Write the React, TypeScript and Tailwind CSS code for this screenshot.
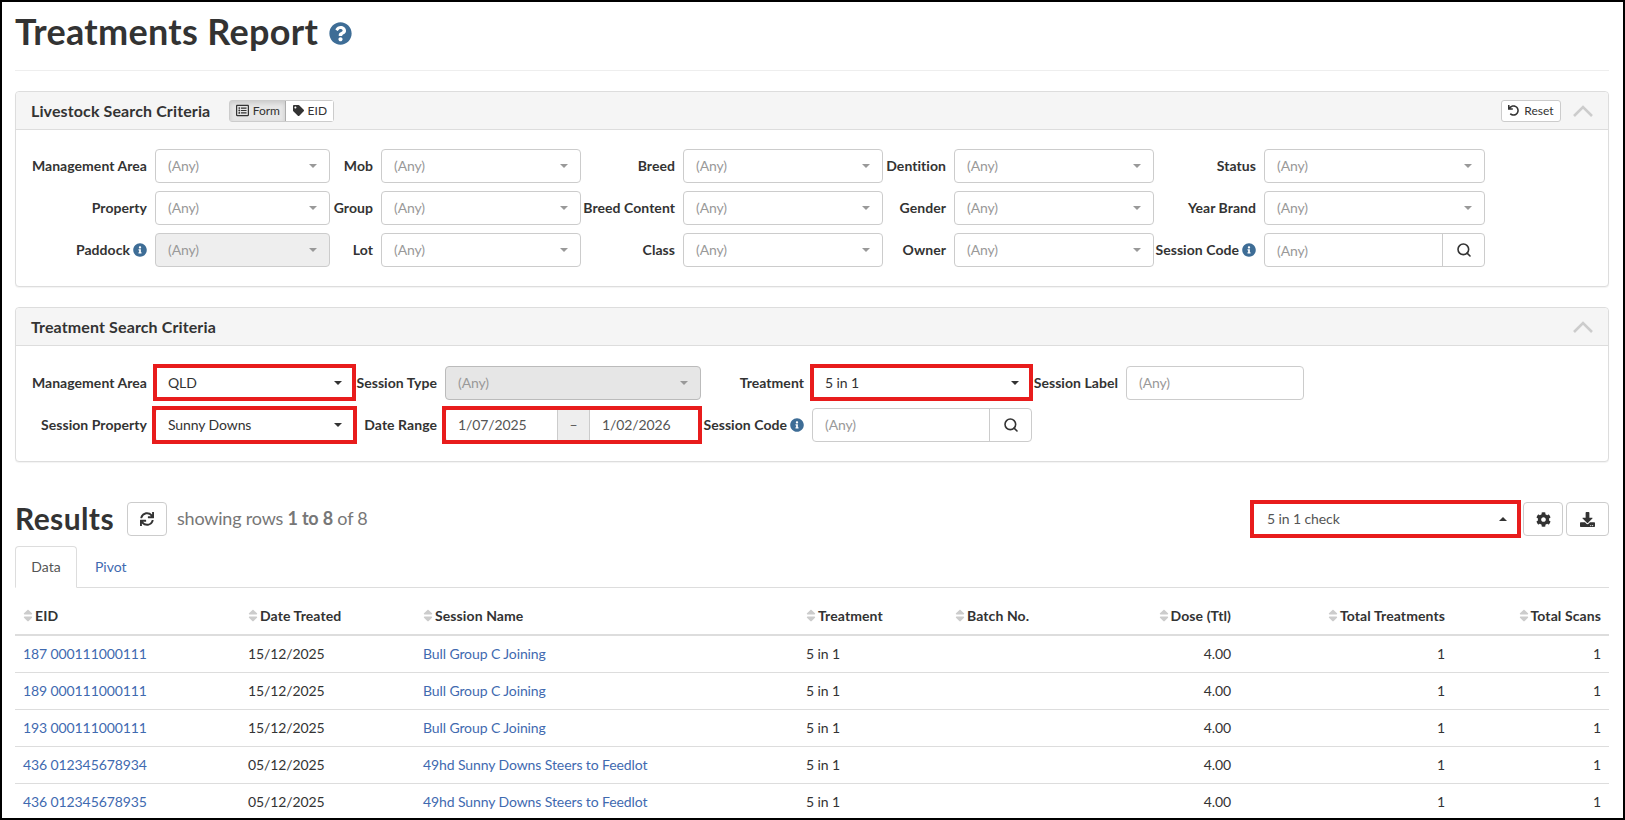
import type { ReactNode } from 'react';
import { Search } from 'lucide-react';
import {
  FaCog,
  FaDownload,
  FaInfoCircle,
  FaQuestionCircle,
  FaRegListAlt,
  FaSort,
  FaSync,
  FaTag,
  FaUndo,
} from 'react-icons/fa';

interface Row {
  eid: string;
  date: string;
  session: string;
}

const rows: Row[] = [
  { eid: '187 000111000111', date: '15/12/2025', session: 'Bull Group C Joining' },
  { eid: '189 000111000111', date: '15/12/2025', session: 'Bull Group C Joining' },
  { eid: '193 000111000111', date: '15/12/2025', session: 'Bull Group C Joining' },
  { eid: '436 012345678934', date: '05/12/2025', session: '49hd Sunny Downs Steers to Feedlot' },
  { eid: '436 012345678935', date: '05/12/2025', session: '49hd Sunny Downs Steers to Feedlot' },
];

function Caret({ dark, up }: { dark?: boolean; up?: boolean }) {
  const color = dark ? 'border-t-[#333]' : 'border-t-[#999]';
  return <span className={`h-0 w-0 border-x-4 border-t-4 border-x-transparent ${color} ${up ? 'rotate-180' : ''}`} />;
}

function Label({ children, info }: { children: ReactNode; info?: boolean }) {
  return (
    <label className="flex h-[34px] items-center justify-end gap-[3px] whitespace-nowrap pr-2 text-[14px] font-bold tracking-[0.05px] text-[#333]">
      {children}
      {info && <FaInfoCircle className="text-[14px] text-[#3e6d96]" />}
    </label>
  );
}

function Select({ value, disabled }: { value?: string; disabled?: boolean }) {
  return (
    <div
      className={`flex h-[34px] items-center justify-between rounded-[4px] border border-[#ccc] pl-3 pr-[12px] text-[14px] tracking-[-0.1px] ${
        disabled ? 'bg-[#eee]' : 'bg-white'
      } ${value ? 'text-[#333]' : 'text-[#999]'}`}
    >
      <span>{value ?? '(Any)'}</span>
      <Caret dark={!!value} />
    </div>
  );
}

function SearchInput({ low }: { low?: boolean }) {
  return (
    <div className="flex h-[34px] rounded-[4px] border border-[#ccc] bg-white text-[14px] tracking-[-0.1px] text-[#999]">
      <span className={`flex flex-1 items-center pl-3 ${low ? 'pt-px' : ''}`}>(Any)</span>
      <span className="flex w-[42px] items-center justify-center border-l border-[#ccc] text-[#333]">
        <Search size={16} strokeWidth={2.4} />
      </span>
    </div>
  );
}

// red annotation drawn over the screenshot
function Marked({ children, className }: { children: ReactNode; className: string }) {
  return (
    <div className="relative">
      {children}
      <div className={`pointer-events-none absolute border-4 border-[#e81c1c] ${className}`} />
    </div>
  );
}

function Chevron() {
  return (
    <svg width="20" height="12" viewBox="0 0 20 12" fill="none" className="text-[#ccc]">
      <polyline points="1,11 10,2 19,11" stroke="currentColor" strokeWidth="2.6" />
    </svg>
  );
}

function Panel({ title, extra, right, children }: { title: string; extra?: ReactNode; right?: ReactNode; children: ReactNode }) {
  return (
    <section className="rounded-[4px] border border-[#ddd] bg-white shadow-[0_1px_1px_rgba(0,0,0,0.05)]">
      <header className="flex h-[38px] items-center rounded-t-[4px] border-b border-[#ddd] bg-[#f5f5f5] pl-[15px] pr-[15px]">
        <h3 className="text-[16px] font-bold tracking-[0.12px] text-[#333]">{title}</h3>
        {extra}
        <div className="ml-auto flex items-center gap-[12px]">
          {right}
          <Chevron />
        </div>
      </header>
      {children}
    </section>
  );
}

function SortHead({ children, right }: { children: ReactNode; right?: boolean }) {
  return (
    <th className={`h-[48px] border-b-2 border-[#ddd] px-2 pb-[6px] align-bottom text-[14px] font-bold tracking-[0.1px] text-[#333] ${right ? 'text-right' : 'text-left'}`}>
      <span className="inline-flex items-center gap-[2px]">
        <FaSort className="h-[15px] w-[10px] text-[#ccc]" />
        {children}
      </span>
    </th>
  );
}

export default function App() {
  return (
    <div className="h-[820px] w-[1625px] overflow-hidden border-2 border-black bg-white pl-[13px] pr-[14px] font-[Lato,sans-serif] text-[14px] leading-5 text-[#333]">
      <div className="flex h-[69px] items-start gap-[11px] border-b border-[#eee] pt-[6px]">
        <h1 className="text-[36px] font-bold leading-[46px] tracking-[0.3px] text-[#333]">Treatments Report</h1>
        <FaQuestionCircle className="mt-[14px] text-[23px] text-[#3e6d96]" />
      </div>

      <div className="mt-5">
        <Panel
          title="Livestock Search Criteria"
          extra={
            <div className="ml-[19px] flex h-[22px] rounded-[3px] border border-[#ccc] text-[12px]">
              <span className="flex w-[56px] items-center justify-center gap-1 border-r border-[#adadad] bg-[#e6e6e6] shadow-[inset_0_2px_4px_rgba(0,0,0,0.125)]">
                <FaRegListAlt className="text-[13px]" /> Form
              </span>
              <span className="flex w-[47px] items-center justify-center gap-1 bg-white">
                <FaTag className="text-[11px]" /> EID
              </span>
            </div>
          }
          right={
            <span className="flex h-[22px] w-[60px] items-center justify-center gap-[5px] rounded-[3px] border border-[#ccc] bg-white text-[12px]">
              <FaUndo className="text-[11px]" /> Reset
            </span>
          }
        >
          <div className="grid grid-cols-[124px_175px_51px_200px_102px_200px_71px_200px_110px_221px] gap-y-2 pb-[19px] pl-[15px] pt-[19px]">
            <Label>Management Area</Label>
            <Select />
            <Label>Mob</Label>
            <Select />
            <Label>Breed</Label>
            <Select />
            <Label>Dentition</Label>
            <Select />
            <Label>Status</Label>
            <Select />

            <Label>Property</Label>
            <Select />
            <Label>Group</Label>
            <Select />
            <Label>Breed Content</Label>
            <Select />
            <Label>Gender</Label>
            <Select />
            <Label>Year Brand</Label>
            <Select />

            <Label info>Paddock</Label>
            <Select disabled />
            <Label>Lot</Label>
            <Select />
            <Label>Class</Label>
            <Select />
            <Label>Owner</Label>
            <Select />
            <Label info>Session Code</Label>
            <SearchInput low />
          </div>
        </Panel>
      </div>

      <div className="mt-5">
        <Panel title="Treatment Search Criteria">
          <div className="grid grid-cols-[124px_200px_90px_256px_111px_220px_94px_178px] gap-y-2 pb-[19px] pl-[15px] pt-[20px]">
            <Label>Management Area</Label>
            <Marked className="-bottom-px -left-[2px] -right-px -top-[2px]">
              <Select value="QLD" />
            </Marked>
            <Label>Session Type</Label>
            <div className="flex h-[34px] items-center justify-between rounded-[4px] border border-[#bbb] bg-[#e6e6e6] pl-3 pr-[12px] tracking-[-0.1px] text-[#999]">
              <span>(Any)</span>
              <Caret />
            </div>
            <Label>Treatment</Label>
            <Marked className="-bottom-px -left-[2px] -right-px -top-[2px]">
              <Select value="5 in 1" />
            </Marked>
            <Label>Session Label</Label>
            <div className="flex h-[34px] items-center rounded-[4px] border border-[#ccc] pl-3 tracking-[-0.1px] text-[#999]">(Any)</div>

            <Label>Session Property</Label>
            <Marked className="-inset-y-[2px] -left-[3px] -right-[2px]">
              <Select value="Sunny Downs" />
            </Marked>
            <Label>Date Range</Label>
            <Marked className="-inset-y-[2px] -left-[3px] -right-px">
              <div className="flex h-[34px] rounded-[4px] border border-[#ccc] tracking-[-0.1px] text-[#555]">
                <span className="flex w-[111px] items-center pl-3">1/07/2025</span>
                <span className="flex w-[33px] items-center justify-center border-x border-[#ccc] bg-[#eee]">–</span>
                <span className="flex flex-1 items-center pl-3">1/02/2026</span>
              </div>
            </Marked>
            <Label info>Session Code</Label>
            <SearchInput />
          </div>
        </Panel>
      </div>

      <div className="mt-[40px] flex h-[34px] items-center">
        <h2 className="w-[112px] pb-[2px] text-[30px] font-bold tracking-[0.4px] text-[#333]">Results</h2>
        <span className="flex h-[34px] w-[40px] items-center justify-center rounded-[4px] border border-[#ccc] text-[14px]">
          <FaSync />
        </span>
        <span className="ml-[10px] pb-[2px] text-[18px] tracking-[-0.2px] text-[#777]">
          showing rows <b className="font-bold">1 to 8</b> of 8
        </span>
        <div className="ml-auto flex items-center">
          <Marked className="-inset-x-[4px] -inset-y-[2px]">
            <div className="flex h-[34px] w-[263px] items-center justify-between pl-[13px] pr-[10px] tracking-[-0.1px] text-[#555]">
              <span>5 in 1 check</span>
              <Caret dark up />
            </div>
          </Marked>
          <span className="ml-[6px] flex h-[34px] w-[40px] items-center justify-center rounded-[4px] border border-[#ccc] text-[15px]">
            <FaCog />
          </span>
          <span className="ml-[3px] flex h-[34px] w-[43px] items-center justify-center rounded-[4px] border border-[#ccc] text-[15px]">
            <FaDownload />
          </span>
        </div>
      </div>

      <div className="mt-[10px] flex h-[42px] border-b border-[#ddd] text-[14px]">
        <span className="-mb-px flex h-[42px] w-[62px] items-center justify-center rounded-t-[4px] border border-[#ddd] border-b-white bg-white text-[#555]">Data</span>
        <span className="flex items-center pl-[18px] text-[#3f6ab0]">Pivot</span>
      </div>

      <table className="w-[1594px] table-fixed border-separate border-spacing-0">
        <colgroup>
          <col className="w-[225px]" />
          <col className="w-[175px]" />
          <col className="w-[383px]" />
          <col className="w-[149px]" />
          <col className="w-[150px]" />
          <col className="w-[142px]" />
          <col className="w-[214px]" />
          <col className="w-[156px]" />
        </colgroup>
        <thead>
          <tr>
            <SortHead>EID</SortHead>
            <SortHead>Date Treated</SortHead>
            <SortHead>Session Name</SortHead>
            <SortHead>Treatment</SortHead>
            <SortHead>Batch No.</SortHead>
            <SortHead right>Dose (Ttl)</SortHead>
            <SortHead right>Total Treatments</SortHead>
            <SortHead right>Total Scans</SortHead>
          </tr>
        </thead>
        <tbody className="tracking-[-0.1px]">
          {rows.map((r) => (
            <tr key={r.eid} className="h-[37px]">
              <td className="border-b border-[#ddd] px-2 text-[#3f6ab0]">{r.eid}</td>
              <td className="border-b border-[#ddd] px-2">{r.date}</td>
              <td className="border-b border-[#ddd] px-2 text-[#3f6ab0]">{r.session}</td>
              <td className="border-b border-[#ddd] px-2">5 in 1</td>
              <td className="border-b border-[#ddd] px-2" />
              <td className="border-b border-[#ddd] px-2 text-right">4.00</td>
              <td className="border-b border-[#ddd] px-2 text-right">1</td>
              <td className="border-b border-[#ddd] px-2 text-right">1</td>
            </tr>
          ))}
        </tbody>
      </table>
    </div>
  );
}
